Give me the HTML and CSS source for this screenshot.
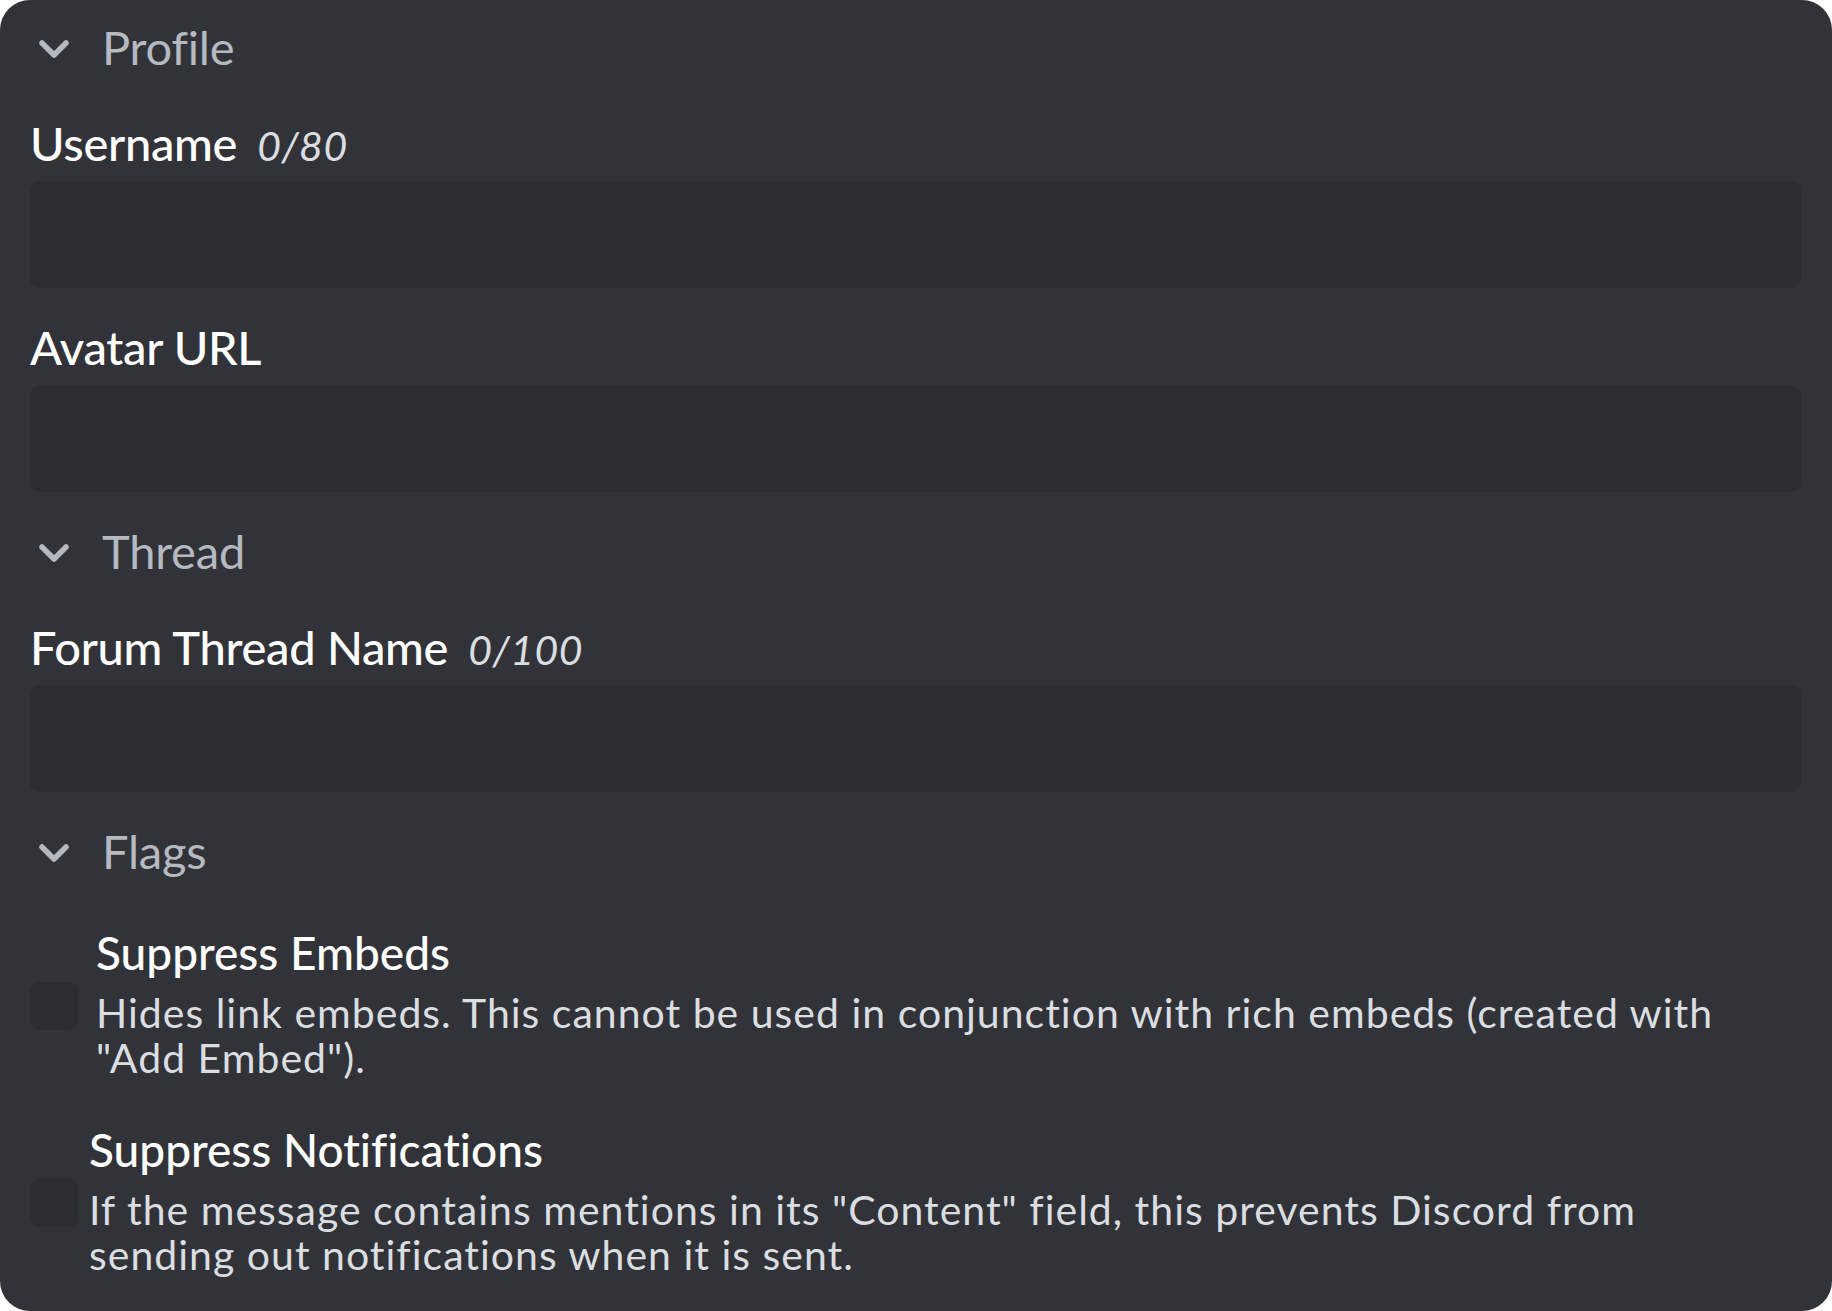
FILE: index.html
```html
<!DOCTYPE html>
<html lang="en">
<head>
<meta charset="utf-8">
<title>Message settings</title>
<link rel="stylesheet" href="styles.css">
</head>
<body>
<div class="card">
  <section class="group">
    <div class="group-header">
      <svg class="chevron" viewBox="0 0 32 20" width="32" height="20" aria-hidden="true"><polyline points="4,4 16,16 28,4"/></svg>
      <span class="group-title">Profile</span>
    </div>
    <div class="field">
      <div class="field-label">Username<span class="counter">0/80</span></div>
      <div class="input"></div>
    </div>
    <div class="field">
      <div class="field-label">Avatar URL</div>
      <div class="input"></div>
    </div>
  </section>

  <section class="group">
    <div class="group-header">
      <svg class="chevron" viewBox="0 0 32 20" width="32" height="20" aria-hidden="true"><polyline points="4,4 16,16 28,4"/></svg>
      <span class="group-title">Thread</span>
    </div>
    <div class="field">
      <div class="field-label">Forum Thread Name<span class="counter">0/100</span></div>
      <div class="input"></div>
    </div>
  </section>

  <section class="group">
    <div class="group-header">
      <svg class="chevron" viewBox="0 0 32 20" width="32" height="20" aria-hidden="true"><polyline points="4,4 16,16 28,4"/></svg>
      <span class="group-title">Flags</span>
    </div>
    <div class="flags">
      <label class="flag flag-wide">
        <span class="checkbox"></span>
        <span class="flag-text">
          <span class="flag-title">Suppress Embeds</span>
          <span class="flag-desc">Hides link embeds. This cannot be used in conjunction with rich embeds (created with<br>"Add Embed").</span>
        </span>
      </label>
      <label class="flag flag-narrow">
        <span class="checkbox"></span>
        <span class="flag-text">
          <span class="flag-title">Suppress Notifications</span>
          <span class="flag-desc">If the message contains mentions in its "Content" field, this prevents Discord from<br>sending out notifications when it is sent.</span>
        </span>
      </label>
    </div>
  </section>
</div>
</body>
</html>
```

FILE: styles.css
```css
* { box-sizing: border-box; }

html, body {
  margin: 0;
  padding: 0;
  background: #ffffff;
}

body {
  font-family: "Lato", "Noto Sans", sans-serif;
  font-variant-ligatures: none;
}

.card {
  min-height: 100vh;
  background: #313338;
  border-radius: 30px;
  padding: 19px 31px 34px 30px;
}

.group + .group {
  margin-top: 31px;
}

.group-header {
  display: flex;
  align-items: center;
  height: 56px;
  padding-left: 8px;
}

.chevron {
  flex: none;
  margin-top: 3px;
  fill: none;
  stroke: #b5bac1;
  stroke-width: 5.5;
  stroke-linecap: round;
  stroke-linejoin: round;
}

.group-title {
  margin-left: 32px;
  font-size: 47px;
  line-height: 56px;
  letter-spacing: -0.2px;
  color: #b5bac1;
  font-weight: 400;
}

.field {
  margin-top: 31px;
}

.group-header + .field {
  margin-top: 40px;
}

.field-label {
  font-size: 47px;
  line-height: 56px;
  font-weight: 500;
  letter-spacing: -0.3px;
  color: #ffffff;
  margin-bottom: 10px;
  white-space: nowrap;
}

.counter {
  margin-left: 20px;
  font-size: 41px;
  line-height: 1;
  letter-spacing: 0.5px;
  font-style: italic;
  font-weight: 400;
  color: #dbdee1;
}

.input {
  height: 107px;
  background: #2b2d31;
  border-radius: 10px;
}

.flags {
  margin-top: 46px;
  display: flex;
  flex-direction: column;
  gap: 42px;
}

.flag {
  display: flex;
  align-items: center;
}

.checkbox {
  flex: none;
  width: 48px;
  height: 48px;
  margin-top: 6px;
  border-radius: 9px;
  background: #2b2d31;
}

.flag-wide .checkbox { margin-right: 18px; }
.flag-narrow .checkbox { margin-right: 11px; }

.flag-text {
  display: flex;
  flex-direction: column;
}

.flag-title {
  font-size: 46px;
  line-height: 56px;
  font-weight: 500;
  color: #ffffff;
  margin-bottom: 9px;
  white-space: nowrap;
}

.flag-desc {
  font-size: 41px;
  line-height: 45px;
  letter-spacing: 1px;
  color: #dbdee1;
  white-space: nowrap;
}
```
